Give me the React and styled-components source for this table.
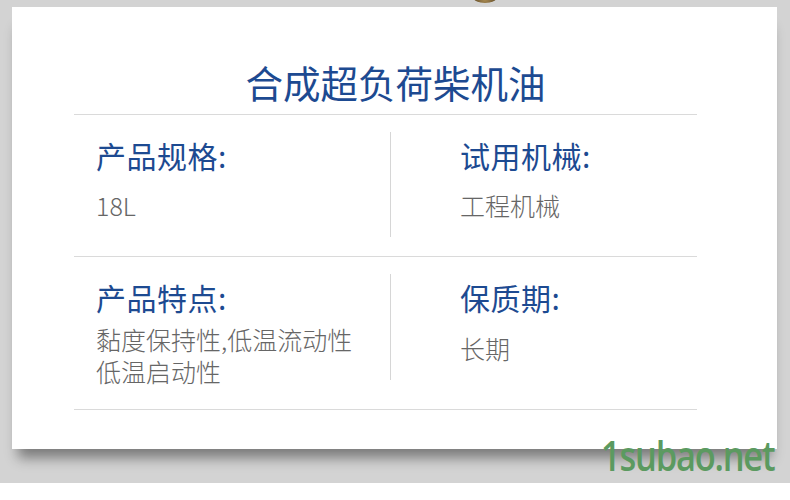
import React from 'react';
import styled, { createGlobalStyle } from 'styled-components';

const GlobalStyle = createGlobalStyle`
  html, body {
    margin: 0;
    padding: 0;
    background: #ffffff;
  }
  body {
    font-family: 'Noto Sans CJK SC', 'Noto Sans', sans-serif;
  }
`;

const Frame = styled.div`
  position: relative;
  width: 790px;
  height: 483px;
  background: #d3d3d3;
  padding: 7px 0 0 12px;
  box-sizing: border-box;
`;

const Knob = styled.div`
  position: absolute;
  left: 473px;
  top: -9px;
  width: 24px;
  height: 12px;
  border-radius: 50%;
  background: radial-gradient(circle at 50% 70%, #a88a52 0%, #6d5630 70%);
`;

const Card = styled.div`
  width: 765px;
  height: 442px;
  background: #ffffff;
  box-shadow: 0 15px 12px -6px rgba(0, 0, 0, 0.42);
  padding-top: 51px;
  box-sizing: border-box;
`;

const Title = styled.h1`
  margin: 0;
  font-size: 37.5px;
  line-height: 48px;
  font-weight: 400;
  color: #1d4a91;
  text-align: center;
  padding-left: 2px;
`;

const Table = styled.div`
  margin: 8px 0 0 62px;
  width: 623px;
  border-top: 1px solid #dadada;
`;

const Row = styled.div`
  display: grid;
  grid-template-columns: 316px 1px 1fr;
  padding: 17px 0 ${(p) => p.$bottom}px;
  border-bottom: 1px solid #dadada;
`;

const Divider = styled.div`
  width: 1px;
  height: ${(p) => p.$height}px;
  background: #d6d6d6;
`;

const Cell = styled.div`
  padding: 5px 0 0 ${(p) => p.$indent}px;
`;

const Label = styled.div`
  font-size: 30px;
  line-height: 36px;
  color: #1d4a91;
  letter-spacing: 0.5px;
`;

const Value = styled.div`
  margin-top: ${(p) => p.$gap}px;
  font-size: 25px;
  line-height: 32px;
  font-weight: 300;
  color: #666666;
`;

const Watermark = styled.div`
  position: absolute;
  right: 16px;
  top: 430px;
  font-family: 'Open Sans', 'Noto Sans', sans-serif;
  font-size: 42px;
  line-height: 50px;
  font-weight: 600;
  letter-spacing: -1.5px;
  color: #5b9a60;
  transform: scaleX(0.82);
  transform-origin: right center;
`;

function Spec({ label, lines, gap, indent }) {
  return (
    <Cell $indent={indent}>
      <Label>{label}</Label>
      <Value $gap={gap}>
        {lines.map((line) => (
          <div key={line}>{line}</div>
        ))}
      </Value>
    </Cell>
  );
}

export default function App() {
  return (
    <>
      <GlobalStyle />
      <Frame>
        <Knob />
        <Card>
          <Title>合成超负荷柴机油</Title>
          <Table>
            <Row $bottom={19}>
              <Spec label="产品规格:" lines={['18L']} gap={16} indent={22} />
              <Divider $height={105} />
              <Spec label="试用机械:" lines={['工程机械']} gap={16} indent={69} />
            </Row>
            <Row $bottom={22}>
              <Spec
                label="产品特点:"
                lines={['黏度保持性,低温流动性', '低温启动性']}
                gap={8}
                indent={22}
              />
              <Divider $height={106} />
              <Spec label="保质期:" lines={['长期']} gap={17} indent={69} />
            </Row>
          </Table>
        </Card>
        <Watermark>1subao.net</Watermark>
      </Frame>
    </>
  );
}
